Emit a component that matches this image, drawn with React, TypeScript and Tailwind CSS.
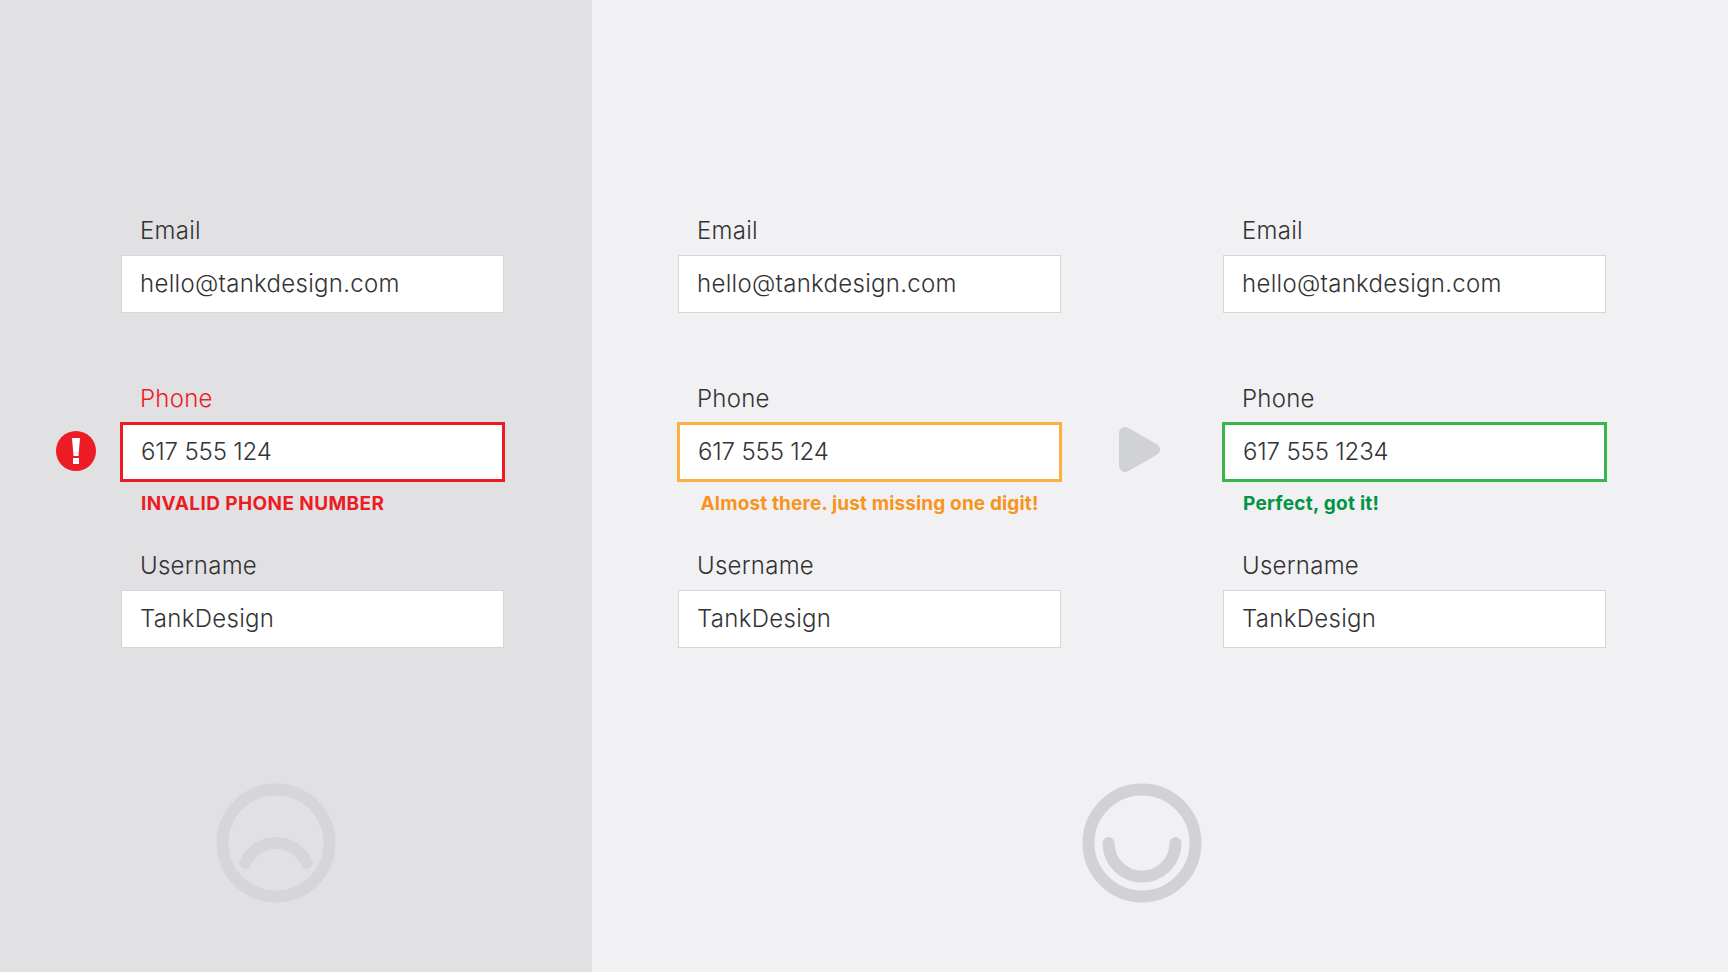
import React from 'react';

type Tone = 'neutral' | 'red' | 'orange' | 'green';

const borders: Record<Tone, string> = {
  neutral: 'border border-[#d6d6d8] h-[58px] w-[383px] tracking-[0.3px]',
  red: 'border-[3px] border-[#ed1c24] h-[60px] w-[385px] -mx-px -my-px tracking-[-0.15px]',
  orange: 'border-[3px] border-[#fbb040] h-[60px] w-[385px] -mx-px -my-px tracking-[-0.15px]',
  green: 'border-[3px] border-[#39b54a] h-[60px] w-[385px] -mx-px -my-px tracking-[-0.15px]',
};

function Field({ label, value, tone = 'neutral', labelClass = 'text-[#333335]', badge, children }: {
  label: string;
  value: string;
  tone?: Tone;
  labelClass?: string;
  badge?: React.ReactNode;
  children?: React.ReactNode;
}) {
  return (
    <div>
      <div className={`h-[46px] pl-[19px] text-[24px] font-light leading-[43px] tracking-[0.25px] ${labelClass}`}>{label}</div>
      <div className="relative">
        {badge}
        <div className={`flex items-center bg-white pl-[18px] pb-px text-[24px] font-light text-[#333335] ${borders[tone]}`}>
          {value}
        </div>
      </div>
      <div className={tone === 'neutral' ? 'h-[64px]' : 'h-[63px] pt-[11px]'}>{children}</div>
    </div>
  );
}

function Message({ className, children }: { className: string; children: React.ReactNode }) {
  return <div className={`text-[19px] font-bold leading-[24px] ${className}`}>{children}</div>;
}

function ErrorBadge() {
  return (
    <svg className="absolute left-[-65px] top-[9px]" width="40" height="40" viewBox="0 0 40 40">
      <circle cx="20" cy="20" r="20" fill="#ed1c24" />
      <polygon points="16,7 24,7 22.5,25 17.5,25" fill="#fff" />
      <rect x="17" y="27" width="6" height="6" fill="#fff" />
    </svg>
  );
}

function Face({ mood, color }: { mood: 'sad' | 'happy'; color: string }) {
  return (
    <svg width="120" height="120" viewBox="0 0 120 120" fill="none" stroke={color} strokeWidth="12" strokeLinecap="round">
      <circle cx="60" cy="60" r="53.5" />
      {mood === 'sad' ? (
        <path d="M29.2 80 A33.7 33.7 0 0 1 90.8 80" />
      ) : (
        <path d="M26.5 60 A33.5 33.5 0 0 0 93.5 60" />
      )}
    </svg>
  );
}

export default function App() {
  return (
    <div className="flex h-[972px] w-[1728px] overflow-hidden font-['Inter',sans-serif]">
      {/* Before */}
      <section className="w-[592px] shrink-0 bg-[#e1e1e3] pl-[121px] pt-[209px]">
        <Field label="Email" value="hello@tankdesign.com" />
        <Field
          label="Phone"
          value="617 555 124"
          tone="red"
          labelClass="text-[#ed1c24]"
          badge={<ErrorBadge />}
        >
          <Message className="pl-[20px] tracking-[0.4px] text-[#ed1c24]">INVALID PHONE NUMBER</Message>
        </Field>
        <Field label="Username" value="TankDesign" />
        <div className="ml-[95px] mt-[71px]">
          <Face mood="sad" color="#d6d6d8" />
        </div>
      </section>

      {/* After */}
      <section className="flex-1 bg-[#f1f1f3] pl-[86px] pt-[209px]">
        <div className="flex">
          <div>
            <Field label="Email" value="hello@tankdesign.com" />
            <Field label="Phone" value="617 555 124" tone="orange">
              <Message className="text-center tracking-[0.14px] text-[#f7941d]">Almost there. just missing one digit!</Message>
            </Field>
            <Field label="Username" value="TankDesign" />
          </div>
          <div className="ml-[58px] w-[104px] pt-[218px]">
            <svg width="41" height="45" viewBox="0 0 41 45" fill="#d1d2d4" stroke="#d1d2d4" strokeWidth="12" strokeLinejoin="round">
              <path d="M6 6 L35 22.5 L6 39 Z" />
            </svg>
          </div>
          <div>
            <Field label="Email" value="hello@tankdesign.com" />
            <Field label="Phone" value="617 555 1234" tone="green">
              <Message className="pl-[20px] tracking-[0.26px] text-[#009444]">Perfect, got it!</Message>
            </Field>
            <Field label="Username" value="TankDesign" />
          </div>
        </div>
        <div className="ml-[404px] mt-[71px] w-[120px]">
          <Face mood="happy" color="#d1d2d4" />
        </div>
      </section>
    </div>
  );
}
